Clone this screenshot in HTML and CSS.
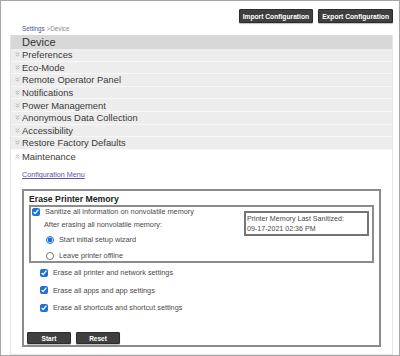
FILE: index.html
```html
<!DOCTYPE html>
<html lang="en">
<head>
    <meta charset="utf-8">
    <title>Device - Maintenance</title>
    <link rel="stylesheet" href="styles.css">
</head>
<body>
    <div class="frame">
        <div class="topbar">
            <button type="button" class="dark-btn">Import Configuration</button>
            <button type="button" class="dark-btn">Export Configuration</button>
        </div>
        <div class="crumb"><a href="#" class="crumb-link">Settings</a> &gt;Device</div>

        <div class="panel">
            <div class="panel-head">Device</div>
            <ul class="menu">
                <li class="menu-row"><svg class="chev" viewBox="0 0 5 5"><polyline points="0.6,0.6 2.5,2 4.4,0.6"/><polyline points="0.6,2.8 2.5,4.2 4.4,2.8"/></svg>Preferences</li>
                <li class="menu-row"><svg class="chev" viewBox="0 0 5 5"><polyline points="0.6,0.6 2.5,2 4.4,0.6"/><polyline points="0.6,2.8 2.5,4.2 4.4,2.8"/></svg>Eco-Mode</li>
                <li class="menu-row"><svg class="chev" viewBox="0 0 5 5"><polyline points="0.6,0.6 2.5,2 4.4,0.6"/><polyline points="0.6,2.8 2.5,4.2 4.4,2.8"/></svg>Remote Operator Panel</li>
                <li class="menu-row"><svg class="chev" viewBox="0 0 5 5"><polyline points="0.6,0.6 2.5,2 4.4,0.6"/><polyline points="0.6,2.8 2.5,4.2 4.4,2.8"/></svg>Notifications</li>
                <li class="menu-row"><svg class="chev" viewBox="0 0 5 5"><polyline points="0.6,0.6 2.5,2 4.4,0.6"/><polyline points="0.6,2.8 2.5,4.2 4.4,2.8"/></svg>Power Management</li>
                <li class="menu-row"><svg class="chev" viewBox="0 0 5 5"><polyline points="0.6,0.6 2.5,2 4.4,0.6"/><polyline points="0.6,2.8 2.5,4.2 4.4,2.8"/></svg>Anonymous Data Collection</li>
                <li class="menu-row"><svg class="chev" viewBox="0 0 5 5"><polyline points="0.6,0.6 2.5,2 4.4,0.6"/><polyline points="0.6,2.8 2.5,4.2 4.4,2.8"/></svg>Accessibility</li>
                <li class="menu-row"><svg class="chev" viewBox="0 0 5 5"><polyline points="0.6,0.6 2.5,2 4.4,0.6"/><polyline points="0.6,2.8 2.5,4.2 4.4,2.8"/></svg>Restore Factory Defaults</li>
                <li class="menu-row open"><svg class="chev" viewBox="0 0 5 5"><polyline points="0.6,2.2 2.5,0.8 4.4,2.2"/><polyline points="0.6,4.4 2.5,3 4.4,4.4"/></svg>Maintenance</li>
            </ul>

            <div class="content">
                <a href="#" class="cfg-link">Configuration Menu</a>

                <div class="erase">
                    <div class="erase-title">Erase Printer Memory</div>
                    <div class="sanitize-box">
                        <div class="sanitize-opts">
                            <label class="opt first"><input type="checkbox" checked>Sanitize all information on nonvolatile memory</label>
                            <div class="opt after">After erasing all nonvolatile memory:</div>
                            <label class="opt radio r1"><input type="radio" name="after" checked>Start initial setup wizard</label>
                            <label class="opt radio r2"><input type="radio" name="after">Leave printer offline</label>
                        </div>
                        <div class="last-sanitized">Printer Memory Last Sanitized:<br>09-17-2021 02:36 PM</div>
                    </div>

                    <label class="opt extra"><input type="checkbox" checked>Erase all printer and network settings</label>
                    <label class="opt extra"><input type="checkbox" checked>Erase all apps and app settings</label>
                    <label class="opt extra"><input type="checkbox" checked>Erase all shortcuts and shortcut settings</label>

                    <div class="actions">
                        <button type="button" class="dark-btn act">Start</button>
                        <button type="button" class="dark-btn act">Reset</button>
                    </div>
                </div>
            </div>
        </div>
    </div>
</body>
</html>
```
FILE: styles.css
```css
body {
    margin: 0;
    background-color: white;
    font-family: "Liberation Sans", Arial, sans-serif;
}
.frame {
    width: 400px;
    height: 356px;
    box-sizing: border-box;
    border: 1px solid #a6a6a6;
    overflow: hidden;
}

/* top buttons */
.topbar {
    display: flex;
    justify-content: flex-end;
    gap: 5px;
    padding: 8px 6px 0 0;
}
.dark-btn {
    font-family: "Liberation Sans", Arial, sans-serif;
    font-weight: bold;
    font-size: 6.7px;
    color: white;
    background-color: #3f3f3f;
    border: 1px solid #2c2c2c;
    border-radius: 1px;
    height: 14px;
    padding: 0 3px;
    box-shadow: 0 1px 1px rgba(0, 0, 0, 0.25);
    cursor: pointer;
}

.crumb {
    font-size: 6.3px;
    line-height: 11px;
    height: 11px;
    padding-left: 21px;
    color: #8a8a8a;
}
.crumb-link {
    color: #4a5896;
    text-decoration: none;
}

/* device panel */
.panel {
    margin: 1px 6px 0 9px;
    height: 320px;
    box-sizing: border-box;
    border-left: 1px solid #e4e4e4;
    border-right: 1px solid #e4e4e4;
    border-bottom: 1px solid #e4e4e4;
}
.panel-head {
    height: 14px;
    line-height: 14px;
    background-color: #d8d8d8;
    color: #333;
    font-size: 11px;
    padding-left: 11px;
}
.menu {
    list-style: none;
    margin: 0;
    padding: 0;
}
.menu-row {
    display: flex;
    align-items: center;
    height: 12.6px;
    box-sizing: border-box;
    border-bottom: 1px solid #f8f8f8;
    background-color: #ededed;
    color: #3a3a3a;
    font-size: 9.4px;
    padding-left: 4px;
}
.menu-row.open {
    background-color: white;
    border-bottom: none;
}
.chev {
    width: 5px;
    height: 5px;
    margin-right: 2px;
    fill: none;
    stroke: #a8a8a8;
    stroke-width: 0.8;
}

.content {
    padding: 8px 0 0 11px;
}
.cfg-link {
    display: block;
    width: max-content;
    font-size: 7.2px;
    line-height: 10px;
    color: #5a54a6;
}

/* erase printer memory */
.erase {
    margin-top: 9px;
    width: 359px;
    box-sizing: border-box;
    border: 2px solid #8c8c8c;
    padding: 0 5px 1px 5px;
}
.erase-title {
    font-weight: bold;
    font-size: 8.7px;
    color: #222;
    line-height: 11px;
    padding-top: 3px;
}
.sanitize-box {
    display: flex;
    justify-content: space-between;
    align-items: flex-start;
    border: 2px solid #8c8c8c;
    padding: 0 3px 1px 1px;
}
.opt {
    display: flex;
    align-items: center;
    height: 9px;
    font-size: 7.3px;
    color: #4a4a4a;
}
.opt input {
    width: 8px;
    height: 8px;
    margin: 0 5px 0 0;
    accent-color: #1f6fd6;
}
.opt.after {
    margin-top: 4px;
    padding-left: 12px;
}
.opt.radio {
    padding-left: 14px;
}
.opt.r1 {
    margin-top: 6px;
}
.opt.r2 {
    margin-top: 7px;
}
.last-sanitized {
    margin-top: 4px;
    width: 125px;
    box-sizing: border-box;
    border: 2px solid #747474;
    padding: 1px 0 0 1px;
    font-size: 7.1px;
    line-height: 10px;
    color: #4a4a4a;
}
.opt.extra {
    padding-left: 11px;
    margin-top: 8.5px;
}
.opt.extra:first-of-type {
    margin-top: 5px;
}
.actions {
    display: flex;
    gap: 5px;
    margin: 20px 0 0 -2px;
}
.dark-btn.act {
    width: 44px;
    height: 12px;
    font-size: 6.5px;
}
```
